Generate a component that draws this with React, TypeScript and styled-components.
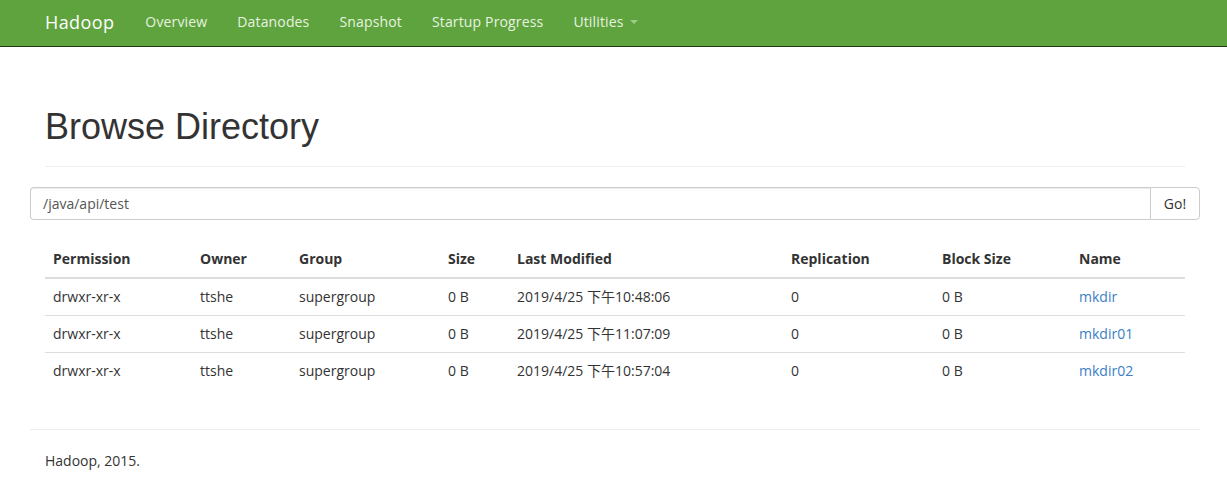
import React from "react";
import styled, { createGlobalStyle } from "styled-components";

const Global = createGlobalStyle`
  html, body { margin: 0; padding: 0; background: #fff; }
  body {
    font-family: "Open Sans", "Noto Sans CJK SC", sans-serif;
    font-size: 14px;
    line-height: 1.42857;
    color: #333;
  }
  * { box-sizing: border-box; }
`;

const Navbar = styled.nav`
  height: 47px;
  background: #5fa33e;
  border-bottom: 1px solid #1f3a12;
  display: flex;
  align-items: center;
  padding-left: 45px;
  padding-bottom: 2px;
`;

const Brand = styled.a`
  font-size: 18px;
  letter-spacing: 0.4px;
  color: #fff;
  text-decoration: none;
  margin-right: 16px;
  line-height: 20px;
`;

const NavLink = styled.a`
  color: #e8f3e0;
  font-size: 14px;
  letter-spacing: 0.15px;
  padding: 0 15px;
  text-decoration: none;
  line-height: 20px;
  display: inline-flex;
  align-items: center;
`;

const Caret = styled.span`
  display: inline-block;
  width: 0;
  height: 0;
  margin-left: 6px;
  border-top: 4px solid #9fcb88;
  border-left: 4px solid transparent;
  border-right: 4px solid transparent;
`;

const Container = styled.div`
  width: 1170px;
  margin-left: 30px;
  padding-top: 20px;
`;

const Inner = styled.div`
  padding: 0 15px;
`;

const Header = styled.div`
  margin: 40px 0 20px;
  padding-bottom: 9px;
  border-bottom: 1px solid #eee;
`;

const Title = styled.h1`
  margin: 20px 0 10px;
  font-family: "Liberation Sans", Arial, sans-serif;
  font-weight: 500;
  font-size: 36px;
  line-height: 1.1;
  color: #333;
`;

const InputGroup = styled.div`
  display: flex;
  height: 33px;
`;

const PathInput = styled.input`
  flex: 1;
  height: 33px;
  padding: 6px 12px;
  font: inherit;
  font-size: 14px;
  color: #555;
  border: 1px solid #ccc;
  border-right: none;
  border-radius: 4px 0 0 4px;
  box-shadow: inset 0 1px 1px rgba(0, 0, 0, 0.075);
  outline: none;
`;

const GoButton = styled.button`
  width: 50px;
  height: 33px;
  font: inherit;
  font-size: 14px;
  color: #333;
  background: #fff;
  border: 1px solid #ccc;
  border-radius: 0 4px 4px 0;
  padding: 6px 12px;
`;

const Table = styled.table`
  width: 100%;
  margin-top: 21px;
  border-collapse: collapse;
  border-spacing: 0;
`;

const Th = styled.th`
  text-align: left;
  font-weight: bold;
  padding: 8px;
  line-height: 20px;
  border-bottom: 2px solid #ddd;
`;

const Td = styled.td`
  padding: 8px;
  line-height: 20px;
  border-top: 1px solid #ddd;
`;

const Link = styled.a`
  color: #3a80c6;
  text-decoration: none;
`;

const Footer = styled.div`
  margin-top: 40px;
  border-top: 1px solid #eee;
  padding: 21px 15px 10px;
`;

const cols = [147, 99, 149, 69, 274, 151, 137, 114];
const heads = ["Permission", "Owner", "Group", "Size", "Last Modified", "Replication", "Block Size", "Name"];
const rows = [
  ["drwxr-xr-x", "ttshe", "supergroup", "0 B", "2019/4/25 下午10:48:06", "0", "0 B", "mkdir"],
  ["drwxr-xr-x", "ttshe", "supergroup", "0 B", "2019/4/25 下午11:07:09", "0", "0 B", "mkdir01"],
  ["drwxr-xr-x", "ttshe", "supergroup", "0 B", "2019/4/25 下午10:57:04", "0", "0 B", "mkdir02"],
];

export default function App() {
  return (
    <>
      <Global />
      <Navbar>
        <Brand href="#">Hadoop</Brand>
        <NavLink href="#">Overview</NavLink>
        <NavLink href="#">Datanodes</NavLink>
        <NavLink href="#">Snapshot</NavLink>
        <NavLink href="#">Startup Progress</NavLink>
        <NavLink href="#">
          Utilities
          <Caret />
        </NavLink>
      </Navbar>
      <Container>
        <Inner>
          <Header>
            <Title>Browse Directory</Title>
          </Header>
        </Inner>
        <InputGroup>
          <PathInput defaultValue="/java/api/test" />
          <GoButton>Go!</GoButton>
        </InputGroup>
        <Inner>
          <Table>
            <colgroup>
              {cols.map((w, i) => (
                <col key={i} style={{ width: w }} />
              ))}
            </colgroup>
            <thead>
              <tr>
                {heads.map((h) => (
                  <Th key={h}>{h}</Th>
                ))}
              </tr>
            </thead>
            <tbody>
              {rows.map((r, i) => (
                <tr key={i}>
                  {r.map((c, j) => (
                    <Td key={j}>{j === 7 ? <Link href="#">{c}</Link> : c}</Td>
                  ))}
                </tr>
              ))}
            </tbody>
          </Table>
        </Inner>
        <Footer>Hadoop, 2015.</Footer>
      </Container>
    </>
  );
}
